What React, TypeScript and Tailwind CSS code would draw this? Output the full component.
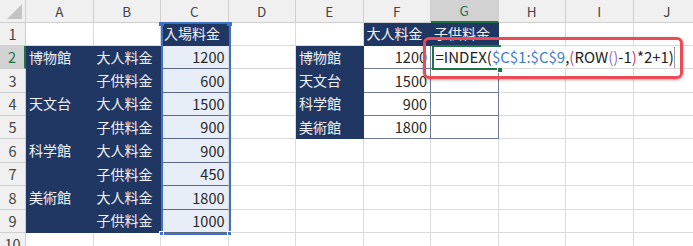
import React from "react";

const COLS = ["A", "B", "C", "D", "E", "F", "G", "H", "I", "J"];
const ROWS = [1, 2, 3, 4, 5, 6, 7, 8, 9, 10];

type Kind = "navy" | "sel" | "tbl" | "plain";
type Cell = { t?: string; kind: Kind; right?: boolean };

const venues: Record<number, string> = { 2: "博物館", 4: "天文台", 6: "科学館", 8: "美術館" };
const prices = [1200, 600, 1500, 900, 900, 450, 1800, 1000];
const adult = [
  ["博物館", 1200],
  ["天文台", 1500],
  ["科学館", 900],
  ["美術館", 1800],
] as const;

function getCell(col: string, row: number): Cell {
  if (col === "A" && row >= 2 && row <= 9) return { t: venues[row], kind: "navy" };
  if (col === "B" && row >= 2 && row <= 9)
    return { t: row % 2 === 0 ? "大人料金" : "子供料金", kind: "navy" };
  if (col === "C" && row === 1) return { t: "入場料金", kind: "navy" };
  if (col === "C" && row >= 2 && row <= 9)
    return { t: String(prices[row - 2]), kind: "sel", right: true };
  if (col === "F" && row === 1) return { t: "大人料金", kind: "navy" };
  if (col === "G" && row === 1) return { t: "子供料金", kind: "navy" };
  if (col === "E" && row >= 2 && row <= 5) return { t: adult[row - 2][0], kind: "navy" };
  if (col === "F" && row >= 2 && row <= 5)
    return { t: String(adult[row - 2][1]), kind: "tbl", right: true };
  if (col === "G" && row >= 2 && row <= 5) return { kind: "tbl" };
  return { kind: "plain" };
}

const kindClass: Record<Kind, string> = {
  navy: "bg-[#203764] border-[#203764] text-[#f0f2f6]",
  sel: "bg-[#e8eef8] border-r-[#dadada] border-b-[#5b6781] text-[#262626]",
  tbl: "bg-white border-[#6f7b93] text-[#262626]",
  plain: "bg-white border-[#dadada] text-[#262626]",
};

const font = { fontFamily: '"Noto Sans CJK JP", "Liberation Sans", sans-serif' };

export default function App() {
  return (
    <div className="relative w-[693px] h-[246px] overflow-hidden bg-white" style={font}>
      <div className="grid grid-cols-[26px_repeat(10,67.5px)] grid-rows-[22.5px_repeat(10,23.4px)]">
        {/* corner */}
        <div className="relative bg-[#f0f0f0] border-r border-b border-[#cfcfcf]">
          <svg className="absolute right-[3px] bottom-[3px]" width="15" height="15" viewBox="0 0 15 15">
            <polygon points="15,0 15,15 0,15" fill="#c4c4c4" />
          </svg>
        </div>
        {COLS.map((c) => (
          <div
            key={c}
            className={
              c === "G"
                ? "flex items-center justify-center bg-[#d2d2d2] border-r border-[#cfcfcf] border-b-2 border-b-[#217346] text-[13.5px] text-[#217346]"
                : "flex items-center justify-center bg-[#f0f0f0] border-r border-b border-[#cfcfcf] text-[13.5px] text-[#444]"
            }
          >
            {c}
          </div>
        ))}
        {ROWS.map((r) => (
          <React.Fragment key={r}>
            <div
              className={
                r === 2
                  ? "flex items-center justify-center bg-[#d2d2d2] border-b border-[#cfcfcf] border-r-2 border-r-[#217346] text-[14.5px] text-[#217346]"
                  : "flex items-center justify-center bg-[#f0f0f0] border-r border-b border-[#cfcfcf] text-[14.5px] text-[#444]"
              }
            >
              {r}
            </div>
            {COLS.map((c) => {
              const cell = getCell(c, r);
              return (
                <div
                  key={c + r}
                  className={`flex items-center overflow-hidden whitespace-nowrap border-r border-b px-[3px] ${
                    cell.right ? "justify-end text-[14.5px]" : "text-[14px]"
                  } ${kindClass[cell.kind]}`}
                >
                  {cell.t}
                </div>
              );
            })}
          </React.Fragment>
        ))}
      </div>

      {/* selection C1:C9 */}
      <div className="absolute left-[160.5px] top-[22px] w-[70px] h-[213px] border-2 border-[#3f72c6]" />
      <div className="absolute left-[159px] top-[22px] w-[5px] h-[4px] bg-[#3f72c6]" />
      <div className="absolute left-[226.5px] top-[22px] w-[5px] h-[4px] bg-[#3f72c6]" />
      <div className="absolute left-[159px] top-[231px] w-[5px] h-[5px] bg-[#3f72c6] border border-white" />
      <div className="absolute left-[226.5px] top-[231px] w-[5px] h-[5px] bg-[#3f72c6] border border-white" />

      {/* active cell G2 */}
      <div className="absolute left-[431.5px] top-[45px] w-[69px] h-[25px] border-l-2 border-t-2 border-b-2 border-[#217346]" />
      <div className="absolute left-[433.5px] top-[47px] w-[241px] h-[21px] bg-white border-r border-[#9a9a9a] flex items-center pl-[2px] text-[15px] text-[#222] whitespace-nowrap">
        <span>=INDEX(</span>
        <span className="text-[#3d7bd6]">$C$1:$C$9</span>
        <span>,</span>
        <span className="text-[#d0457a]">(</span>
        <span>ROW</span>
        <span className="text-[#9a6fd0]">()</span>
        <span>-1</span>
        <span className="text-[#d0457a]">)</span>
        <span>*2+1)</span>
      </div>
      <div className="absolute left-[496.5px] top-[67px] w-[6px] h-[6px] bg-[#217346] border border-white" />

      {/* callout frame */}
      <div className="absolute left-[422.5px] top-[36.5px] w-[260px] h-[42px] rounded-[6px] border-[3px] border-[#ea4b56] shadow-[0_1px_3px_rgba(0,0,0,0.35)]" />
    </div>
  );
}
